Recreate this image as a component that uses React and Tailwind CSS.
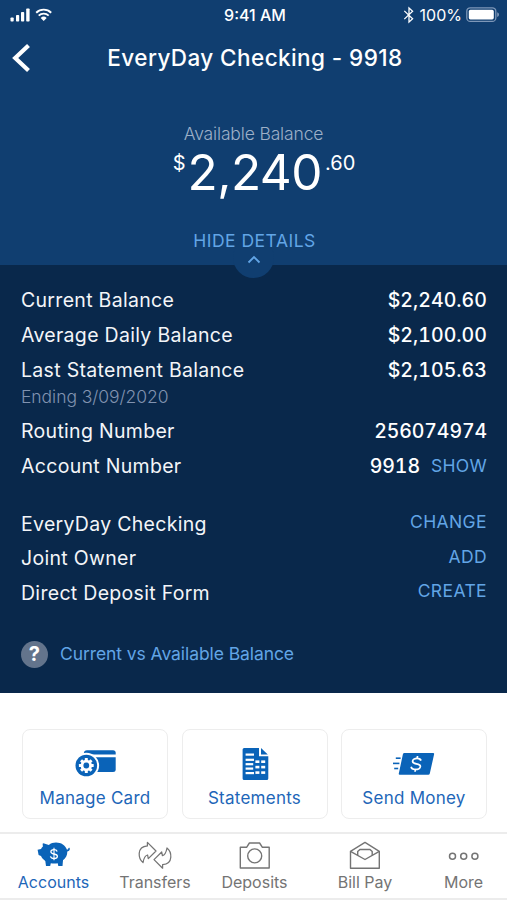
import React from "react";

const balances = [
  { label: "Current Balance", value: "$2,240.60" },
  { label: "Average Daily Balance", value: "$2,100.00" },
  { label: "Last Statement Balance", value: "$2,105.63" },
];

const settings = [
  { label: "EveryDay Checking", action: "CHANGE" },
  { label: "Joint Owner", action: "ADD" },
  { label: "Direct Deposit Form", action: "CREATE" },
];

function SignalIcon() {
  return (
    <svg width="42" height="16" viewBox="0 0 42 16" fill="#fff">
      <rect x="0.5" y="10.5" width="3.2" height="4" rx="0.8" />
      <rect x="6" y="8" width="3.2" height="6.5" rx="0.8" />
      <rect x="11" y="5" width="3.2" height="9.5" rx="0.8" />
      <rect x="16.2" y="1.5" width="3.4" height="13" rx="0.8" />
      <g fill="none" stroke="#fff" strokeWidth="1.9">
        <path d="M26.2 5.7a10.8 10.8 0 0 1 15 0" />
        <path d="M28.7 8.6a7.2 7.2 0 0 1 10 0" />
      </g>
      <path d="M30.7 10.9a4.4 4.4 0 0 1 6 0l-3 3.2z" />
    </svg>
  );
}

function BluetoothIcon() {
  return (
    <svg width="12" height="18" viewBox="0 0 12 18" fill="none" stroke="#fff" strokeWidth="1.3">
      <path d="M1.3 4.9l8.3 7.8-3.6 3.4V1.9l3.6 3.4-8.3 7.8" />
    </svg>
  );
}

function BatteryIcon() {
  return (
    <svg width="34" height="16" viewBox="0 0 34 16">
      <rect x="0.8" y="0.8" width="29" height="13.6" rx="3.5" fill="none" stroke="#7e97b8" strokeWidth="1.3" />
      <rect x="2.8" y="2.8" width="25" height="9.6" rx="1.6" fill="#fff" />
      <path d="M31.2 5.3c2.4.7 2.4 4 0 4.7z" fill="#7e97b8" />
    </svg>
  );
}

function ManageCardIcon() {
  const teeth = [0, 45, 90, 135, 180, 225, 270, 315];
  return (
    <svg width="42" height="36" viewBox="0 0 42 36" className="ml-[1px]">
      <path d="M8.8 7.5Q9 4.3 12 4.3H38q2.7 0 2.7 2.5V8.5H8.8z" fill="#0a63b8" />
      <path d="M9 11.3H40.7V23.5q0 2.5-2.7 2.5H12z" fill="#0a63b8" />
      <circle cx="11.3" cy="19.5" r="12.8" fill="#fff" />
      <circle cx="11.3" cy="19.5" r="10.8" fill="#0a63b8" />
      <circle cx="11.3" cy="19.5" r="4.3" fill="none" stroke="#fff" strokeWidth="2.8" />
      {teeth.map((a) => (
        <rect key={a} x="9.8" y="12.1" width="3" height="3" rx="0.5" fill="#fff" transform={`rotate(${a} 11.3 19.5)`} />
      ))}
    </svg>
  );
}

function StatementIcon() {
  return (
    <svg width="28" height="34" viewBox="0 0 28 34" className="ml-[2px]">
      <path d="M2.2 1H17v8.2h9.3V31.5q0 1.6-1.6 1.6H2.2q-1.6 0-1.6-1.6V2.6Q.6 1 2.2 1z" fill="#0a63b8" />
      <path d="M19 1l6.8 6.6H19z" fill="#0a63b8" />
      <g fill="#fff">
        <rect x="3.6" y="6.5" width="8.4" height="2.2" />
        <rect x="3.6" y="11.7" width="8.4" height="2.2" />
        <rect x="3.6" y="16.1" width="7.6" height="2.2" />
        <rect x="3.6" y="20.5" width="7.6" height="2.2" />
        <rect x="3.6" y="25" width="8.4" height="2.2" />
        <rect x="13.4" y="13.4" width="4" height="2.6" />
        <rect x="19.2" y="13.4" width="4" height="2.6" />
        <rect x="13.4" y="18.8" width="4" height="2.6" />
        <rect x="19.2" y="18.8" width="4" height="2.6" />
        <rect x="13.4" y="24.3" width="4" height="2.6" />
        <rect x="19.2" y="24.3" width="4" height="2.6" />
      </g>
    </svg>
  );
}

function SendMoneyIcon() {
  return (
    <svg width="42" height="26" viewBox="0 0 42 26">
      <path d="M11.4 2H40.2q1.2 0 .9 1.2L36.8 22.6q-.3 1.2-1.5 1.2H6.7q-1.2 0-.9-1.2L9.9 3.2Q10.2 2 11.4 2z" fill="#0a63b8" />
      <g stroke="#0a63b8" strokeWidth="1.6">
        <path d="M2.8 7.2H7.6" />
        <path d="M0 12.4H6.4" />
        <path d="M1.2 17.5H5.2" />
      </g>
      <g transform="translate(23.3 12.8) skewX(-9)" fill="none" stroke="#fff" strokeWidth="1.7">
        <path d="M4.2-3.2C3.4-4.9 1.8-5.5 0-5.5c-2.4 0-4.1 1-4.1 2.8C-4.1-.8-2.2-.4 0 0c2.5.4 4.5 1 4.5 2.9 0 1.8-1.9 2.8-4.5 2.8-2.3 0-4.1-.8-4.7-2.7" />
        <path d="M0-7.8V-5M0 5V7.9" />
      </g>
    </svg>
  );
}

function PiggyIcon() {
  return (
    <svg width="34" height="28" viewBox="0 0 34 28">
      <path
        d="M5.6 2.8Q6.2 2 7.2 2.4l4.6 1.5C13.9 2.4 16.3 1.6 19 1.6c5.2 0 9.5 2.8 10.8 7 1.2.1 1.8-.6 1.5-1.6l1.3-.2c.7 2-.3 3.5-2.3 3.8.1 3.8-1.5 6.6-4.3 8.7l-.5 5.6h-4.2l-.6-2.6c-2.2.4-4.6.4-6.9 0l-.6 2.6H9l-.7-5C6.3 18.6 5 17 4 15L1.6 14 .6 8.8l3.4-.9c.6-1 1.2-1.7 1.9-2.3z"
        fill="#0a63b8"
      />
      <g transform="translate(17 13)" fill="none" stroke="#fff" strokeWidth="1.3">
        <path d="M3.2-2.6C2.6-4 1.4-4.4 0-4.4c-1.8 0-3.1.8-3.1 2.2C-3.1-.7-1.7-.3 0 0c1.9.3 3.4.8 3.4 2.3C3.4 3.8 1.9 4.5 0 4.5c-1.8 0-3.1-.6-3.6-2.1" />
        <path d="M0-6.2V6.2" strokeWidth="1.1" />
      </g>
    </svg>
  );
}

const curvedArrow =
  "M9.4 1.4L18 10 10.3 17.6 9.6 14C6.6 14.4 5.8 17.3 5 21.6 2.2 19.4 1 16 1.2 12.4 1.5 8 4.6 5.3 9.4 4.9z";

function TransfersIcon() {
  return (
    <svg width="34" height="28" viewBox="0 0 34 28" fill="none" stroke="#747474" strokeWidth="1.25" strokeLinejoin="round">
      <path d={curvedArrow} />
      <path d={curvedArrow} transform="rotate(180 17 14.3)" />
    </svg>
  );
}

function CameraIcon() {
  return (
    <svg width="32" height="28" viewBox="0 0 32 28" fill="none" stroke="#747474" strokeWidth="1.4" strokeLinejoin="round">
      <path d="M1.3 6.3H7.6L10.4 2H20.6L23.4 6.3H30.2V27H1.3z" />
      <circle cx="15.7" cy="14.9" r="7" />
    </svg>
  );
}

function EnvelopeIcon() {
  return (
    <svg width="32" height="28" viewBox="0 0 32 28" fill="none" stroke="#747474" strokeWidth="1.4" strokeLinejoin="round">
      <path d="M1.5 10.3L16 1.4l14.3 8.9V27.2H1.5z" />
      <path d="M1.5 10.3L16 18.5l14.3-8.2" />
      <path d="M8.7 14.2V10.6l2.2-2.1H21l2.2 2.1v3.6" />
    </svg>
  );
}

function MoreIcon() {
  return (
    <svg width="32" height="28" viewBox="0 0 32 28" fill="none" stroke="#747474" strokeWidth="1.5">
      <circle cx="4.5" cy="15.3" r="3" />
      <circle cx="15.7" cy="15.3" r="3" />
      <circle cx="26.9" cy="15.3" r="3" />
    </svg>
  );
}

function QuickAction({ icon, label }) {
  return (
    <button className="flex h-[90px] flex-1 flex-col items-center rounded-lg border-[1.5px] border-[#ededed] bg-white pt-[15px] text-[#1d66b8]">
      <span className="flex h-[38px] items-center">{icon}</span>
      <span className="mt-[3px] text-[17px] leading-[24px] tracking-[0.25px] whitespace-nowrap">{label}</span>
    </button>
  );
}

function NavItem({ icon, label, className }) {
  return (
    <button className={`flex flex-col items-center pt-[7px] ${className}`}>
      {icon}
      <span className="mt-[2px] text-[16px] leading-[22px] whitespace-nowrap">{label}</span>
    </button>
  );
}

export default function App() {
  return (
    <div className="flex h-[900px] w-[507px] flex-col overflow-hidden bg-white font-['Inter','Liberation_Sans',sans-serif]">
      <header className="relative z-10 flex h-[265px] shrink-0 flex-col bg-[#103e70] text-white">
        <div className="grid h-[29px] shrink-0 grid-cols-3 items-center pr-[7px] pl-[10px] text-[16px]">
          <SignalIcon />
          <span className="text-center font-medium">9:41 AM</span>
          <span className="flex items-center justify-end gap-[5px]">
            <BluetoothIcon />
            <span className="-mr-px">100%</span>
            <BatteryIcon />
          </span>
        </div>
        <div className="grid h-[58px] shrink-0 grid-cols-[60px_1fr_60px] items-center">
          <button className="pl-[12px]">
            <svg width="20" height="30" viewBox="0 0 20 30" fill="none" stroke="#fff" strokeWidth="4.2">
              <path d="M16.5 2.5L3.2 15l13.3 12.5" />
            </svg>
          </button>
          <h1 className="pl-[3px] text-center text-[22.5px] font-[450] tracking-[0.42px] whitespace-nowrap">EveryDay Checking - 9918</h1>
        </div>
        <div className="flex shrink-0 flex-col items-center pt-[35px]">
          <p className="text-[17.5px] leading-[24px] font-[350] tracking-[-0.15px] text-[#9db0c8]">Available Balance</p>
          <div className="flex items-start pl-[21px]">
            <span className="pt-[5px] text-[20px] leading-[24px]">$</span>
            <span className="pl-[2px] text-[49.5px] leading-[52px] font-[380] tracking-[-0.5px]">2,240</span>
            <span className="pt-[5px] pl-[3px] text-[20px] leading-[24px]">.60</span>
          </div>
        </div>
        <button className="relative z-10 mt-[30px] shrink-0 pl-[2px] text-center text-[17.5px] leading-[25px] tracking-[0.5px] text-[#62a5e6]">
          HIDE DETAILS
        </button>
        <div className="mx-auto -mt-[16px] flex h-[41px] w-[41px] shrink-0 justify-center rounded-full bg-[#103e70] pt-[18px]">
          <svg width="14" height="9" viewBox="0 0 14 9" fill="none" stroke="#62a5e6" strokeWidth="1.8">
            <path d="M1.5 7.5L7 2l5.5 5.5" />
          </svg>
        </div>
      </header>

      <section className="h-[428px] shrink-0 bg-[#09284b] pt-[18px] pr-[20px] pl-[21px] text-[19.5px] tracking-[0.3px] text-[#f3f5f8]">
        {balances.map((b) => (
          <div key={b.label} className="flex h-[35px] items-center justify-between">
            <span>{b.label}</span>
            <span className="font-medium tracking-[0.05px] text-white tabular-nums">{b.value}</span>
          </div>
        ))}
        <p className="-mt-px text-[17.5px] leading-[20px] font-[350] tracking-[-0.05px] text-[#8193b0]">Ending 3/09/2020</p>
        <div className="mt-[7px] flex h-[35px] items-center justify-between">
          <span>Routing Number</span>
          <span className="font-medium tracking-[-0.1px] text-white tabular-nums">256074974</span>
        </div>
        <div className="flex h-[35px] items-center justify-between">
          <span>Account Number</span>
          <span className="flex items-center gap-[11px]">
            <span className="font-medium tracking-[-0.1px] text-white tabular-nums">9918</span>
            <span className="text-[17.5px] text-[#62a5e6]">SHOW</span>
          </span>
        </div>
        <div className="mt-[23px]">
          {settings.map((s) => (
            <div key={s.label} className="flex h-[34.5px] items-center justify-between">
              <span>{s.label}</span>
              <button className="mb-[4px] text-[17.5px] tracking-[0.4px] text-[#62a5e6]">{s.action}</button>
            </div>
          ))}
        </div>
        <div className="mt-[30px] flex items-center gap-[12px]">
          <span className="flex h-[27px] w-[27px] items-center justify-center rounded-full bg-[#63748c] text-[20px] font-bold text-white">?</span>
          <span className="text-[17.5px] tracking-[-0.08px] text-[#62a5e6]">Current vs Available Balance</span>
        </div>
      </section>

      <section className="flex h-[139px] shrink-0 gap-[13.5px] pt-[36px] pr-[20px] pl-[22px]">
        <QuickAction icon={<ManageCardIcon />} label="Manage Card" />
        <QuickAction icon={<StatementIcon />} label="Statements" />
        <QuickAction icon={<SendMoneyIcon />} label="Send Money" />
      </section>

      <nav className="flex h-[68px] shrink-0 border-t-2 border-b-2 border-[#ececec] text-[#747474]">
        <NavItem icon={<PiggyIcon />} label="Accounts" className="w-[107px] text-[#1d66b8]" />
        <NavItem icon={<TransfersIcon />} label="Transfers" className="w-[96px]" />
        <NavItem icon={<CameraIcon />} label="Deposits" className="w-[103px]" />
        <NavItem icon={<EnvelopeIcon />} label="Bill Pay" className="w-[118px]" />
        <NavItem icon={<MoreIcon />} label="More" className="w-[79px]" />
      </nav>
    </div>
  );
}
